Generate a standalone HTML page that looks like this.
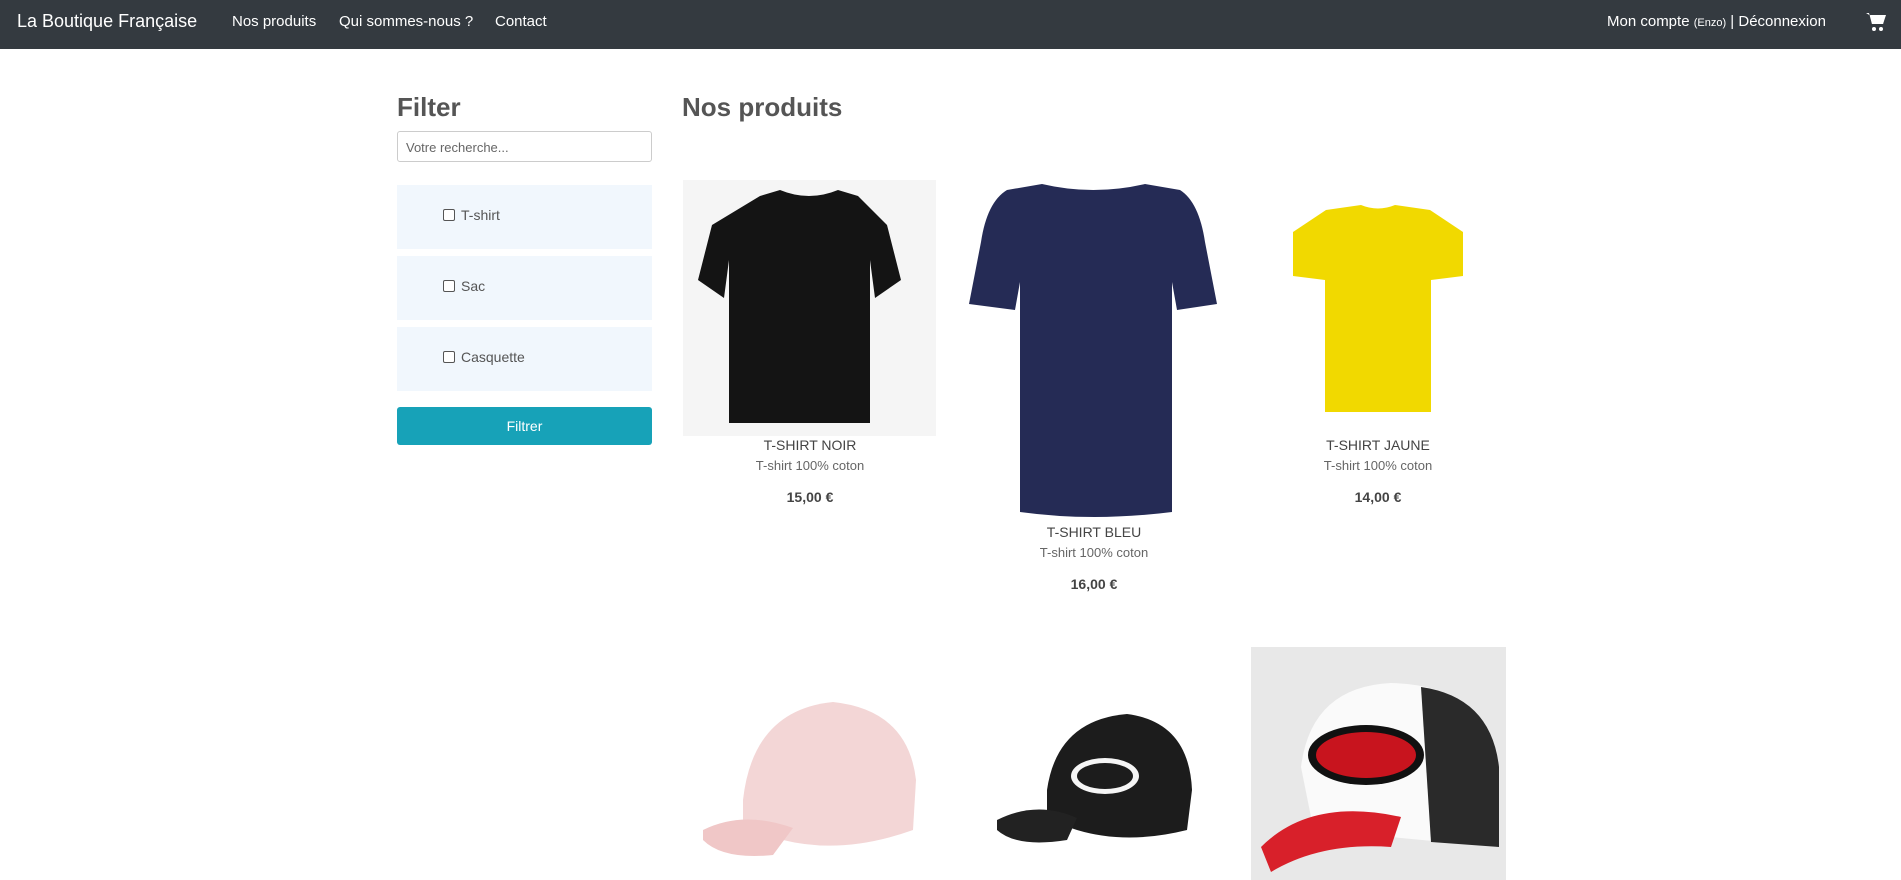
<!DOCTYPE html>
<html><head><meta charset="utf-8"><style>
*{box-sizing:border-box;margin:0;padding:0}
body{width:1901px;height:880px;overflow:hidden;background:#fff;font-family:"Liberation Sans",sans-serif;color:#555;position:relative}
.nav{position:absolute;left:0;top:0;width:1901px;height:49px;background:#343a40;color:#fff}
.nav span{position:absolute;top:13px;font-size:15px;white-space:nowrap}
.abs{position:absolute}
h2{position:absolute;font-size:26px;font-weight:bold;color:#555}
.inp{left:397px;top:131px;width:255px;height:31px;border:1px solid #ccc;border-radius:3px;font-size:13px;padding:8px 8px;color:#666}
.box{left:397px;width:255px;height:64px;background:#f1f7fd;font-size:14px;color:#555}
.box i{position:absolute;left:46px;top:24px;width:12px;height:12px;border:1px solid #555;border-radius:2px;background:#fff}
.box b{position:absolute;left:64px;top:22px;font-weight:normal}
.btn{left:397px;top:407px;width:255px;height:38px;background:#17a2b8;border-radius:3px;color:#fff;font-size:14px;text-align:center;line-height:38px}
.t{position:absolute;width:254px;text-align:center}
.t .n{font-size:14px;color:#444}
.t .d{font-size:13px;color:#666;margin-top:5px}
.t .p{font-size:14px;font-weight:bold;color:#444;margin-top:16px}
</style></head><body>
<div class="nav">
<span style="left:17px;top:11px;font-size:18px">La Boutique Française</span>
<span style="left:232px">Nos produits</span>
<span style="left:339px">Qui sommes-nous ?</span>
<span style="left:495px">Contact</span>
<span style="left:1607px">Mon compte <small style="font-size:11px">(Enzo)</small> | Déconnexion</span>
<svg class="abs" style="left:1866px;top:12px" width="20" height="20" viewBox="0 0 20 20"><path d="M0 1h3l3 11h11l2-8H5" fill="#fff"/><path d="M4 3h16l-3 9H6z" fill="#fff"/><circle cx="8" cy="17" r="2" fill="#fff"/><circle cx="15" cy="17" r="2" fill="#fff"/></svg>
</div>
<h2 style="left:397px;top:92px">Filter</h2>
<h2 style="left:682px;top:92px">Nos produits</h2>
<div class="abs inp">Votre recherche...</div>
<div class="abs box" style="top:185px"><i></i><b>T-shirt</b></div>
<div class="abs box" style="top:256px"><i></i><b>Sac</b></div>
<div class="abs box" style="top:327px"><i></i><b>Casquette</b></div>
<div class="abs btn">Filtrer</div>

<div class="abs" style="left:683px;top:180px;width:253px;height:256px;background:#f5f5f5"></div>
<svg class="abs" style="left:683px;top:180px" width="253" height="256" viewBox="0 0 253 256"><path d="M77 16L97 10Q126 22 155 10L175 16L204 45L218 100L192 118L187 80L187 243L46 243L46 80L41 118L15 100L29 45Z" fill="#141414"/></svg>
<div class="t" style="left:683px;top:437px"><div class="n">T-SHIRT NOIR</div><div class="d">T-shirt 100% coton</div><div class="p">15,00 €</div></div>

<svg class="abs" style="left:967px;top:182px" width="254" height="338" viewBox="0 0 254 338"><path d="M40 8L75 2Q126 14 178 2L213 8Q232 20 238 60L250 122L210 128L205 100L205 330Q126 340 53 330L53 100L48 128L2 122L14 60Q20 20 40 8Z" fill="#252b55"/></svg>
<div class="t" style="left:967px;top:524px"><div class="n">T-SHIRT BLEU</div><div class="d">T-shirt 100% coton</div><div class="p">16,00 €</div></div>

<svg class="abs" style="left:1251px;top:200px" width="254" height="220" viewBox="0 0 254 220"><path d="M75 10L110 5Q127 12 144 5L179 10L212 32L212 76L180 80L180 212L74 212L74 80L42 76L42 32Z" fill="#f1d900"/></svg>
<div class="t" style="left:1251px;top:437px"><div class="n">T-SHIRT JAUNE</div><div class="d">T-shirt 100% coton</div><div class="p">14,00 €</div></div>

<svg class="abs" style="left:683px;top:690px" width="253" height="190" viewBox="0 0 253 190"><path d="M60 110Q70 20 150 12Q225 20 233 90L230 140Q160 165 100 150L60 140Z" fill="#f3d6d6"/><path d="M20 140Q60 120 110 138L90 165Q40 170 20 150Z" fill="#f0c7c7"/></svg>
<svg class="abs" style="left:967px;top:700px" width="253" height="170" viewBox="0 0 253 170"><path d="M80 90Q90 20 160 14Q222 22 225 90L220 130Q160 145 110 130L80 120Z" fill="#1c1c1c"/><path d="M30 120Q70 100 110 118L100 140Q50 148 30 130Z" fill="#222"/><ellipse cx="138" cy="76" rx="34" ry="18" fill="#f5f5f5"/><ellipse cx="138" cy="76" rx="28" ry="13" fill="#1c1c1c"/></svg>
<div class="abs" style="left:1251px;top:647px;width:255px;height:233px;background:#e8e8e8"></div>
<svg class="abs" style="left:1251px;top:647px" width="255" height="233" viewBox="0 0 255 233"><path d="M50 120Q60 40 140 36Q230 38 245 110L245 200L140 190L60 170Z" fill="#fafafa"/><path d="M170 40Q240 50 248 120L248 200L180 195Z" fill="#2a2a2a"/><path d="M10 200Q60 150 150 170L140 200Q70 195 20 225Z" fill="#d8202a"/><ellipse cx="115" cy="108" rx="58" ry="30" fill="#111"/><ellipse cx="115" cy="108" rx="50" ry="23" fill="#c8141e"/></svg>
</body></html>
